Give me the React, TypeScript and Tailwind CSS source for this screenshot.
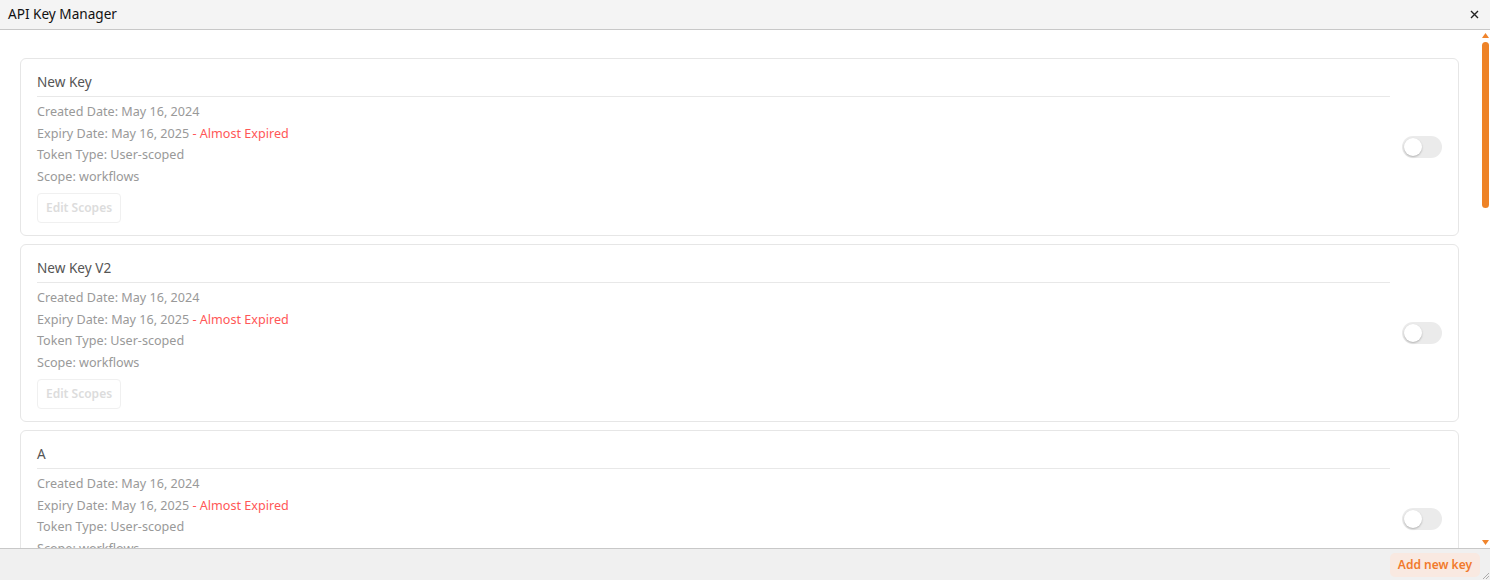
const keys = [
  { name: "New Key", created: "May 16, 2024", expiry: "May 16, 2025" },
  { name: "New Key V2", created: "May 16, 2024", expiry: "May 16, 2025" },
  { name: "A", created: "May 16, 2024", expiry: "May 16, 2025" },
];

function Toggle() {
  return (
    <div className="-mt-[1px] flex h-[22px] w-[40px] shrink-0 items-center rounded-full bg-[#ebebeb] px-[2px]">
      <div className="h-[18px] w-[18px] rounded-full bg-white shadow-[0_1px_2px_rgba(0,0,0,0.25)]" />
    </div>
  );
}

function KeyCard({ k }: { k: (typeof keys)[number] }) {
  return (
    <div className="flex shrink-0 items-center gap-3 rounded-md border border-[#e6e6e6] bg-white px-[16px] pt-[13px] pb-[12px]">
      <div className="flex-1">
        <div className="border-b border-[#e8e8e8] pb-[4px] text-[13.6px] leading-[20px] text-[#555]">{k.name}</div>
        <div className="pt-[4px] text-[12.6px] leading-[21.5px] text-[#999]">
          <div>Created Date: {k.created}</div>
          <div>
            Expiry Date: {k.expiry} <span className="text-[#ff5757]">- Almost Expired</span>
          </div>
          <div>Token Type: User-scoped</div>
          <div>Scope: workflows</div>
        </div>
        <button className="mt-[6px] h-[30px] rounded-[4px] border border-[#f0f0f0] bg-white px-[8px] text-[12px] font-semibold text-[#dcdcdc]">
          Edit Scopes
        </button>
      </div>
      <Toggle />
    </div>
  );
}

export default function App() {
  return (
    <div
      className="flex h-[580px] w-[1490px] flex-col overflow-hidden bg-white"
      style={{ fontFamily: '"Segoe UI", "Noto Sans", "Open Sans", sans-serif' }}
    >
      <header className="flex h-[30px] shrink-0 items-center justify-between border-b border-[#c8c8c8] bg-[#f4f4f4] pl-[8px] pr-[11px]">
        <span className="text-[13.6px] text-[#111]">API Key Manager</span>
        <svg width="9" height="9" viewBox="0 0 9 9" className="text-[#222]">
          <path d="M1 1L8 8M8 1L1 8" stroke="currentColor" strokeWidth="1.4" />
        </svg>
      </header>

      <div className="flex min-h-0 flex-1">
        <div className="flex min-w-0 flex-1 flex-col gap-[8px] overflow-hidden pt-[28px] pl-[20px] pr-[21px]">
          {keys.map((k) => (
            <KeyCard key={k.name} k={k} />
          ))}
        </div>
        <div className="flex w-[10px] shrink-0 flex-col items-center pt-[3px] pb-[3px]">
          <svg width="7" height="5" viewBox="0 0 7 5">
            <path d="M3.5 0L7 5H0Z" fill="#f0842c" />
          </svg>
          <div className="mt-[4px] h-[166px] w-[7px] rounded-full bg-[#ee8327]" />
          <div className="flex-1" />
          <svg width="7" height="5" viewBox="0 0 7 5">
            <path d="M0 0H7L3.5 5Z" fill="#f0842c" />
          </svg>
        </div>
      </div>

      <footer className="relative flex h-[32px] shrink-0 items-center justify-end border-t border-[#c8c8c8] bg-[#f0f0f0] pr-[10px]">
        <button className="h-[24px] rounded-[5px] bg-[#f9e9e1] px-[8px] text-[12px] font-semibold text-[#f17a2c]">
          Add new key
        </button>
        <svg width="6" height="6" viewBox="0 0 6 6" className="absolute right-[1px] bottom-[1px]">
          <path d="M6 0L0 6M6 3L3 6" stroke="#999" strokeWidth="0.8" />
        </svg>
      </footer>
    </div>
  );
}
